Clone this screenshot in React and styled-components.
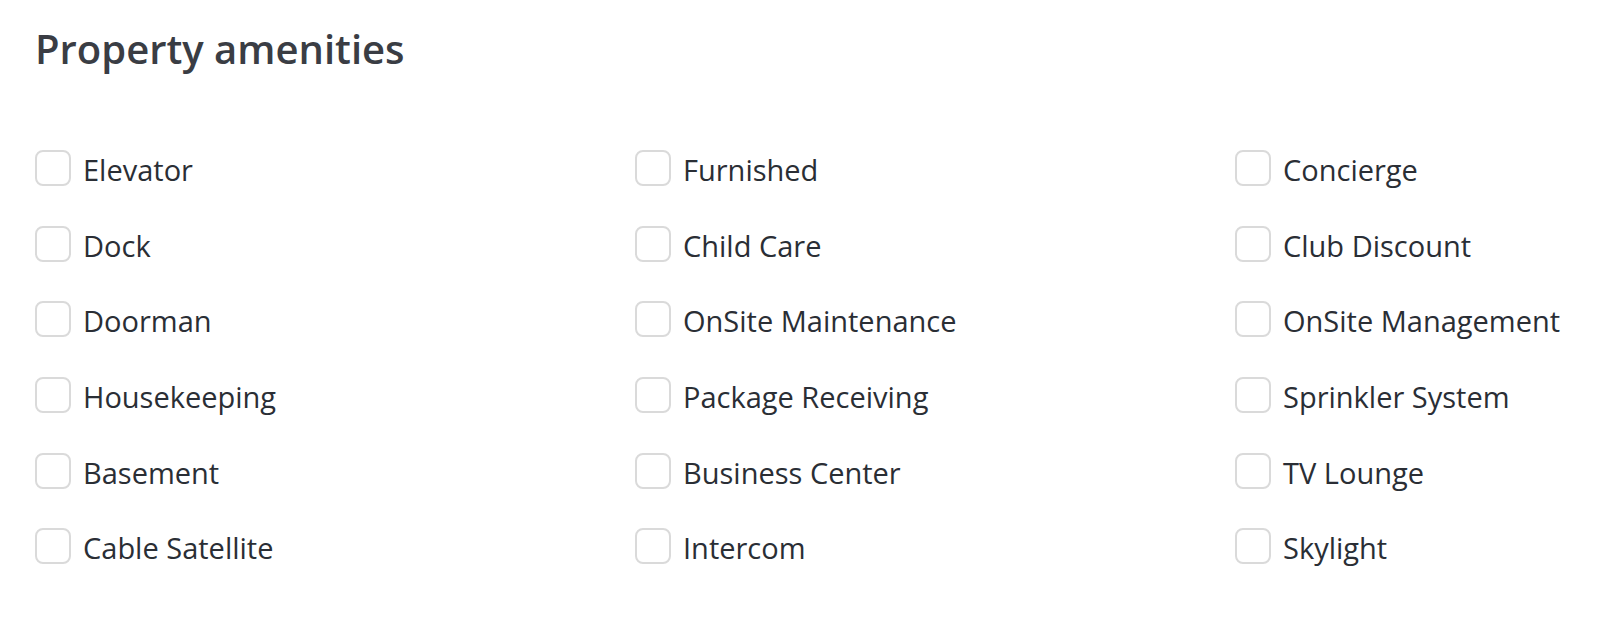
import React from 'react'
import styled, { createGlobalStyle } from 'styled-components'

const GlobalStyle = createGlobalStyle`
  body {
    margin: 0;
    background: #ffffff;
    font-family: 'Open Sans', 'Liberation Sans', sans-serif;
  }
`

const Page = styled.div`
  padding: 21px 35px 0;
  overflow: hidden;
`

const Title = styled.h2`
  margin: 0;
  font-size: 40px;
  line-height: 56px;
  font-weight: 600;
  color: #3a3d44;
`

const Grid = styled.div`
  margin-top: 73px;
  display: grid;
  grid-template-columns: 600px 600px 1fr;
  grid-auto-rows: 75.7px;
`

const Item = styled.label`
  display: flex;
  align-items: flex-start;
  gap: 12px;
  cursor: pointer;
`

const Box = styled.span`
  width: 36px;
  height: 36px;
  box-sizing: border-box;
  border: 2px solid #dadada;
  border-radius: 8px;
  flex-shrink: 0;
`

const Label = styled.span`
  padding-top: 2px;
  font-size: 29px;
  line-height: 36px;
  color: #2a2e35;
  white-space: nowrap;
`

const amenities = [
  'Elevator', 'Furnished', 'Concierge',
  'Dock', 'Child Care', 'Club Discount',
  'Doorman', 'OnSite Maintenance', 'OnSite Management',
  'Housekeeping', 'Package Receiving', 'Sprinkler System',
  'Basement', 'Business Center', 'TV Lounge',
  'Cable Satellite', 'Intercom', 'Skylight',
]

const App = () => (
  <Page>
    <GlobalStyle />
    <Title>Property amenities</Title>
    <Grid>
      {amenities.map(name => (
        <Item key={name}>
          <Box />
          <Label>{name}</Label>
        </Item>
      ))}
    </Grid>
  </Page>
)

export default App
